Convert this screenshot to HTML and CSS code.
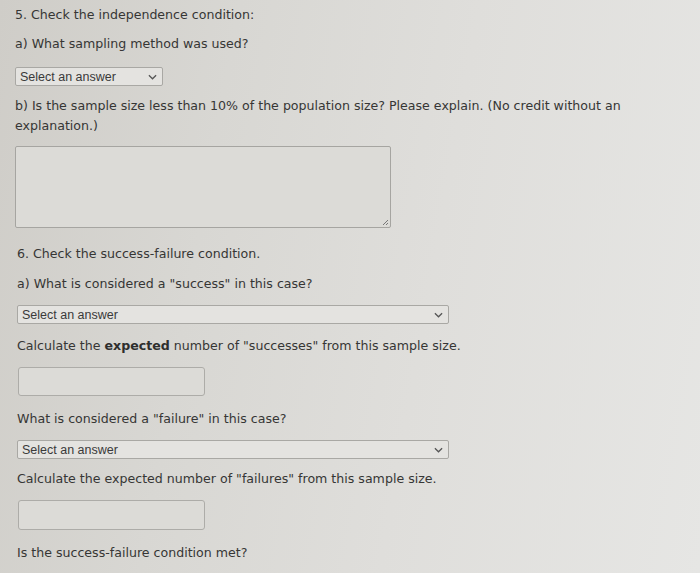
FILE: index.html
```html
<!DOCTYPE html>
<html lang="en">
  <head>
    <meta charset="utf-8">
    <title>Inference for proportions</title>
    <link rel="stylesheet" href="styles.css">
  </head>
  <body>
    <main id="page-main">
      <section class="question" id="q5">
        <p class="prompt">5. Check the independence condition:</p>
        <p class="prompt">a) What sampling method was used?</p>
        <div class="select short">
          <span>Select an answer</span>
          <svg class="chevron" viewBox="0 0 10 6" width="9" height="6"><path d="M1 1l4 4 4-4" fill="none" stroke="#555" stroke-width="1.4"/></svg>
        </div>
        <p class="prompt">b) Is the sample size less than 10% of the population size? Please explain. (No credit without an explanation.)</p>
        <div class="textarea">
          <svg class="grip" viewBox="0 0 8 8" width="8" height="8"><path d="M7 2L2 7M7 5L5 7" fill="none" stroke="#777" stroke-width="1"/></svg>
        </div>
      </section>
      <section class="question" id="q6">
        <p class="prompt">6. Check the success-failure condition.</p>
        <p class="prompt">a) What is considered a "success" in this case?</p>
        <div class="select wide">
          <span>Select an answer</span>
          <svg class="chevron" viewBox="0 0 10 6" width="9" height="6"><path d="M1 1l4 4 4-4" fill="none" stroke="#555" stroke-width="1.4"/></svg>
        </div>
        <p class="prompt">Calculate the <b>expected</b> number of "successes" from this sample size.</p>
        <div class="answer-box"></div>
        <p class="prompt">What is considered a "failure" in this case?</p>
        <div class="select wide compact">
          <span>Select an answer</span>
          <svg class="chevron" viewBox="0 0 10 6" width="9" height="6"><path d="M1 1l4 4 4-4" fill="none" stroke="#555" stroke-width="1.4"/></svg>
        </div>
        <p class="prompt">Calculate the expected number of "failures" from this sample size.</p>
        <div class="answer-box"></div>
        <p class="prompt">Is the success-failure condition met?</p>
      </section>
    </main>
  </body>
</html>
```

FILE: styles.css
```css
html,
body {
  height: 100%;
}
body {
  margin: 0;
  overflow: hidden;
  font-family: Tahoma, "DejaVu Sans", "Noto Sans", sans-serif;
  font-size: 12.6px;
  color: #363635;
  background: linear-gradient(100deg, #cfcdc8 0%, #d8d7d3 30%, #dfdedb 60%, #e6e6e4 100%);
}
#page-main {
  padding: 5px 0 0 15px;
}
.prompt {
  margin: 0;
  line-height: 20px;
}
.prompt b {
  font-weight: bold;
  color: #2e2e2d;
}
#q5 .prompt:first-child {
  margin-bottom: 9px;
}
#q5 .prompt:nth-child(2) {
  margin-bottom: 13px;
}
#q5 .prompt:nth-child(4) {
  width: 620px;
  margin-top: 10px;
}
.select {
  display: flex;
  align-items: center;
  justify-content: space-between;
  box-sizing: border-box;
  height: 19px;
  padding: 0 5px 0 4px;
  font-family: "Liberation Sans", Arial, sans-serif;
  font-size: 12.5px;
  color: #3a3a3a;
  background: #e4e3e0;
  border: 1px solid #a9a8a4;
  border-radius: 2px;
}
.select.short {
  width: 148px;
}
.select.wide {
  width: 432px;
  margin: 11px 0 12px 0;
}
.select.compact {
  margin-bottom: 10px;
}
.textarea {
  position: relative;
  box-sizing: border-box;
  width: 376px;
  height: 82px;
  margin-top: 10px;
  background: #dcdbd7;
  border: 1px solid #a6a5a1;
  border-radius: 2px;
}
.grip {
  position: absolute;
  right: 1px;
  bottom: 1px;
}
#q6 {
  padding-left: 2px;
  margin-top: 16px;
}
#q6 .prompt:first-child {
  margin-bottom: 10px;
}
.answer-box {
  box-sizing: border-box;
  width: 187px;
  height: 29px;
  margin: 11px 0 13px 1px;
  background: #dcdbd7;
  border: 1px solid #adaca8;
  border-radius: 3px;
}
.answer-box:last-of-type {
  height: 30px;
}
```
